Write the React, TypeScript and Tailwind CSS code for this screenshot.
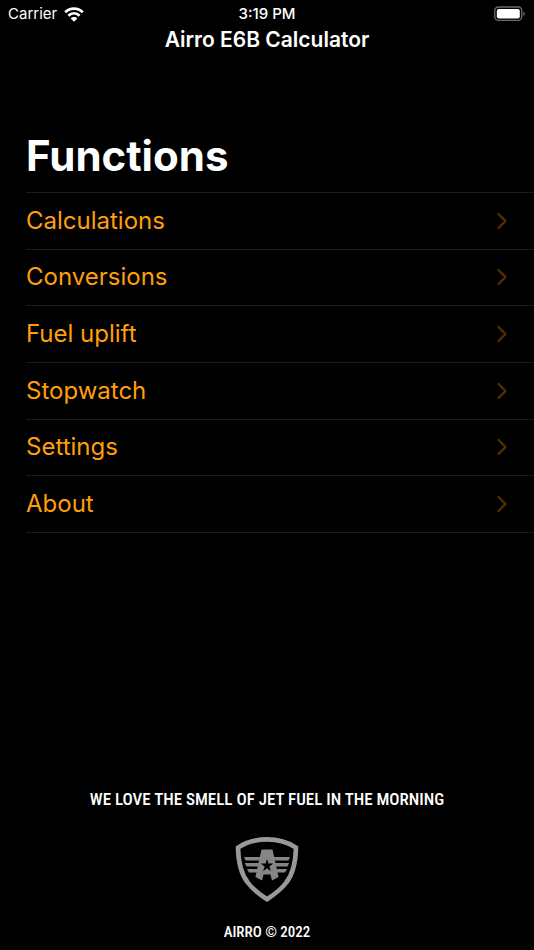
import { ChevronRight } from "lucide-react";

const functions = [
  { label: "Calculations", href: "#calculations" },
  { label: "Conversions", href: "#conversions" },
  { label: "Fuel uplift", href: "#fuel-uplift" },
  { label: "Stopwatch", href: "#stopwatch" },
  { label: "Settings", href: "#settings" },
  { label: "About", href: "#about" },
];

function WifiIcon() {
  return (
    <svg width="20" height="15" viewBox="0 0 20 15" fill="none" stroke="#fff" strokeWidth="2.8" aria-hidden="true">
      <path d="M1.2 5.3C6.3 0.4 13.7 0.4 18.8 5.3" />
      <path d="M4.4 8.7C7.7 5.6 12.3 5.6 15.6 8.7" />
      <path d="M10 14.8L6.7 11.4C8.5 9.6 11.5 9.6 13.3 11.4Z" fill="#fff" stroke="none" />
    </svg>
  );
}

function BatteryIcon() {
  return (
    <svg width="32" height="16" viewBox="0 0 32 16" aria-hidden="true">
      <rect x="0.8" y="1" width="27" height="13.4" rx="3.6" fill="none" stroke="#6b6b6b" strokeWidth="1.3" />
      <rect x="2.8" y="3" width="23" height="9.4" rx="2" fill="#fff" />
      <path d="M29.3 5.4C31.3 6.2 31.3 9.2 29.3 10Z" fill="#6b6b6b" />
    </svg>
  );
}

function StatusBar() {
  return (
    <div className="grid grid-cols-3 items-center h-7 px-2 text-[15px]">
      <div className="flex items-center gap-[7px]">
        <span>Carrier</span>
        <WifiIcon />
      </div>
      <span className="text-center font-medium">3:19 PM</span>
      <div className="flex justify-end">
        <BatteryIcon />
      </div>
    </div>
  );
}

function Shield() {
  return (
    <svg width="64" height="66" viewBox="0 0 64 66" aria-hidden="true">
      <path
        d="M32 2.4C42 2.4 52.5 5 61 10.6C60.7 24 58 37 51.3 45.5C46.5 52 39.5 57.4 32 62.2C24.5 57.4 17.5 52 12.7 45.5C6 37 3.3 24 3 10.6C11.5 5 22 2.4 32 2.4Z"
        fill="none"
        stroke="#999"
        strokeWidth="4.6"
      />
      <g fill="#868686">
        <path d="M9 20H25.5L24.8 23.4H10.5Z" />
        <path d="M55 20H38.5L39.2 23.4H53.5Z" />
        <path d="M9.8 26H24L23.2 29.4H11.5Z" />
        <path d="M54.2 26H40L40.8 29.4H52.5Z" />
        <path d="M12 32H22.5L21.7 35.4H14Z" />
        <path d="M52 32H41.5L42.3 35.4H50Z" />
        <path
          fillRule="evenodd"
          d="M26.5 12.5H37.5L43.6 40L37 43.5L35.4 37.4H28.6L27 43.5L20.4 40ZM32 22L30.5 26.6H25.8L29.6 29.5L28.1 34.2L32 31.3L35.9 34.2L34.4 29.5L38.2 26.6H33.5Z"
        />
      </g>
    </svg>
  );
}

export default function App() {
  return (
    <div className="min-h-screen flex flex-col bg-black text-white font-['Inter',sans-serif]">
      <StatusBar />
      <header className="text-center text-[21px] leading-6 font-semibold">Airro E6B Calculator</header>

      <main className="mt-[78px]">
        <h1 className="pl-[26px] pb-2.5 text-[42px] leading-[52px] font-bold">Functions</h1>
        <nav className="ml-[26px] grid auto-rows-fr min-h-[341px] border-t border-[#1c1c1c]">
          {functions.map((item) => (
            <a
              key={item.href}
              href={item.href}
              className="flex items-center justify-between pr-[18px] border-b border-[#1c1c1c] text-[24px] text-[#ff9f0a]"
            >
              {item.label}
              <ChevronRight size={28} strokeWidth={2} className="text-[#522f00]" />
            </a>
          ))}
        </nav>
      </main>

      <footer className="mt-auto flex flex-col items-center pb-1 font-['Roboto_Condensed','Roboto',sans-serif] font-medium">
        <p className="text-[17px] leading-7">WE LOVE THE SMELL OF JET FUEL IN THE MORNING</p>
        <div className="mt-6 mb-[15px]">
          <Shield />
        </div>
        <p className="text-[15px] leading-7">AIRRO © 2022</p>
      </footer>
    </div>
  );
}
